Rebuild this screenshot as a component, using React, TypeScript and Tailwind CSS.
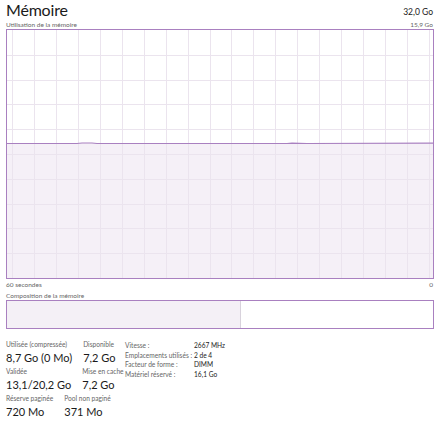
import React from "react";

const font = { fontFamily: 'Lato, "Open Sans", sans-serif' };

function Chart() {
  const w = 426;
  const h = 248;
  const vlines: number[] = [];
  for (let x = 5; x < w; x += 21.95) vlines.push(Math.round(x) + 0.5);
  const hlines: number[] = [];
  for (let i = 1; i < 10; i++) hlines.push(Math.round(i * 24.8) + 0.5);
  const lineY = 113.5;
  const pts = `0,${lineY} 70,${lineY} 75,${lineY - 0.5} 85,${lineY - 0.5} 90,${lineY} 280,${lineY} 285,${lineY - 0.4} 300,${lineY} ${w},${lineY - 0.3}`;
  return (
    <svg width={w} height={h} className="block">
      <polygon points={`${pts} ${w},${h} 0,${h}`} fill="#f5f0f7" />
      {vlines.map((x) => (
        <line key={"v" + x} x1={x} y1={0} x2={x} y2={h} stroke="#ebe4ee" strokeWidth={1} />
      ))}
      {hlines.map((y) => (
        <line key={"h" + y} x1={0} y1={y} x2={w} y2={y} stroke="#ebe4ee" strokeWidth={1} />
      ))}
      <polyline points={pts} fill="none" stroke="#a980c0" strokeWidth={1.2} />
    </svg>
  );
}

function Stat({ label, value }: { label: string; value: string }) {
  return (
    <div className="flex flex-col">
      <div className="text-[6.6px] leading-[9px] text-[#666666] whitespace-nowrap">{label}</div>
      <div className="text-[11px] leading-[18px] text-[#1a1a1a] whitespace-nowrap">{value}</div>
    </div>
  );
}

export default function App() {
  return (
    <div className="w-[440px] h-[424px] bg-white px-[6px] overflow-hidden" style={font}>
      <div className="flex justify-between items-end h-[20px]">
        <div className="text-[16px] leading-[20px] text-[#1a1a1a] tracking-[-0.2px]">Mémoire</div>
        <div className="text-[8.5px] leading-[12px] text-[#1a1a1a] pr-[1px] pb-[2px]">32,0 Go</div>
      </div>
      <div className="flex justify-between items-center h-[9px] text-[6.5px] leading-[9px] text-[#666666]">
        <span>Utilisation de la mémoire</span>
        <span className="pr-[1px]">15,9 Go</span>
      </div>
      <div className="border border-[#a980c0] w-[428px] h-[250px]">
        <Chart />
      </div>
      <div className="flex justify-between items-center h-[11px] text-[6.5px] leading-[9px] text-[#666666]">
        <span>60 secondes</span>
        <span className="pr-[1px]">0</span>
      </div>
      <div className="flex items-center h-[10px] text-[6.5px] leading-[9px] text-[#666666]">
        <span>Composition de la mémoire</span>
      </div>
      <div className="border border-[#a980c0] w-[428px] h-[29px] flex">
        <div className="w-[234px] h-full bg-[#f4f0f6] border-r border-[#d8d2dc]" />
        <div className="flex-1" />
      </div>
      <div className="flex items-start mt-[11px]">
        <div className="w-[119px] shrink-0 flex flex-col">
          <div className="flex gap-[11px]">
            <Stat label="Utilisée (compressée)" value="8,7 Go (0 Mo)" />
            <Stat label="Disponible" value="7,2 Go" />
          </div>
          <div className="flex gap-[11px]">
            <Stat label="Validée" value="13,1/20,2 Go" />
            <Stat label="Mise en cache" value="7,2 Go" />
          </div>
          <div className="flex gap-[11px]">
            <Stat label="Réserve paginée" value="720 Mo" />
            <Stat label="Pool non paginé" value="371 Mo" />
          </div>
        </div>
        <div className="grid grid-cols-[69px_auto] content-start pt-[1px] text-[6.6px] leading-[9.6px] whitespace-nowrap">
          <span className="text-[#666666]">Vitesse :</span>
          <span className="text-[#1a1a1a]">2667 MHz</span>
          <span className="text-[#666666]">Emplacements utilisés :</span>
          <span className="text-[#1a1a1a]">2 de 4</span>
          <span className="text-[#666666]">Facteur de forme :</span>
          <span className="text-[#1a1a1a]">DIMM</span>
          <span className="text-[#666666]">Matériel réservé :</span>
          <span className="text-[#1a1a1a]">16,1 Go</span>
        </div>
      </div>
    </div>
  );
}
